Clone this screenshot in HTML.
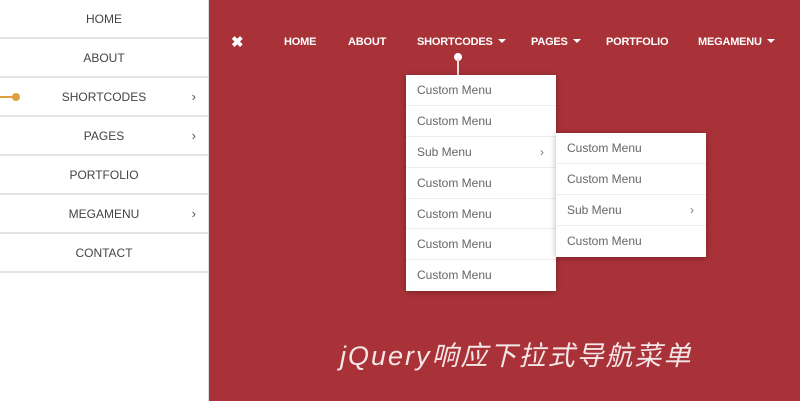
<!DOCTYPE html>
<html><head><meta charset="utf-8"><style>
*{margin:0;padding:0;box-sizing:border-box}
body{width:800px;height:401px;overflow:hidden;background:#a93238;font-family:"Liberation Sans","Noto Sans CJK SC",sans-serif;position:relative}
.side{position:absolute;left:0;top:0;width:209px;height:401px;background:#fff;border-right:1px solid #ddd}
.side div{height:39px;border-bottom:2px solid #e4e4e4;text-align:center;line-height:38px;font-size:12px;color:#444;position:relative}
.side .ar{position:absolute;right:12px;top:0;font-size:13px;color:#555}
.nav{position:absolute;top:36px;color:#fff;font-weight:bold;font-size:11px;letter-spacing:-0.2px}
.car{display:inline-block;width:0;height:0;border-left:4px solid transparent;border-right:4px solid transparent;border-top:4px solid #fff;vertical-align:middle;margin-left:5px;margin-top:-2px}
.dd{position:absolute;background:#fff;box-shadow:0 1px 6px rgba(0,0,0,.3)}
.dd div{height:30.9px;line-height:30px;border-bottom:1px solid #eee;padding-left:11px;font-size:12px;color:#666;position:relative}
.dd div:last-child{border-bottom:none}
.dd .ar{position:absolute;right:12px;top:0;color:#777}
</style></head><body>
<div class="side">
<div>HOME</div><div>ABOUT</div>
<div>SHORTCODES<span class="ar">›</span></div>
<div>PAGES<span class="ar">›</span></div>
<div>PORTFOLIO</div>
<div>MEGAMENU<span class="ar">›</span></div>
<div>CONTACT</div>
</div>
<div style="position:absolute;left:0;top:96px;width:15px;height:2px;background:#e0a040"></div>
<div style="position:absolute;left:12px;top:93px;width:8px;height:8px;border-radius:50%;background:#e0a040"></div>
<div class="nav" style="left:231px;font-size:15px;top:33px">✖</div>
<div class="nav" style="left:284px">HOME</div>
<div class="nav" style="left:348px">ABOUT</div>
<div class="nav" style="left:417px">SHORTCODES<span class="car"></span></div>
<div class="nav" style="left:531px">PAGES<span class="car"></span></div>
<div class="nav" style="left:606px">PORTFOLIO</div>
<div class="nav" style="left:698px">MEGAMENU<span class="car"></span></div>
<div style="position:absolute;left:454px;top:53px;width:8px;height:8px;border-radius:50%;background:#fff"></div>
<div style="position:absolute;left:457px;top:58px;width:2px;height:18px;background:#f3dede"></div>
<div class="dd" style="left:406px;top:75px;width:150px">
<div>Custom Menu</div><div>Custom Menu</div><div>Sub Menu<span class="ar">›</span></div><div>Custom Menu</div><div>Custom Menu</div><div>Custom Menu</div><div>Custom Menu</div>
</div>
<div class="dd" style="left:556px;top:133px;width:150px">
<div>Custom Menu</div><div>Custom Menu</div><div>Sub Menu<span class="ar">›</span></div><div>Custom Menu</div>
</div>
<div style="position:absolute;left:340px;top:334px;font-size:27px;font-style:italic;color:#f3e6e6;letter-spacing:2px;white-space:nowrap">jQuery响应下拉式导航菜单</div>
</body></html>
